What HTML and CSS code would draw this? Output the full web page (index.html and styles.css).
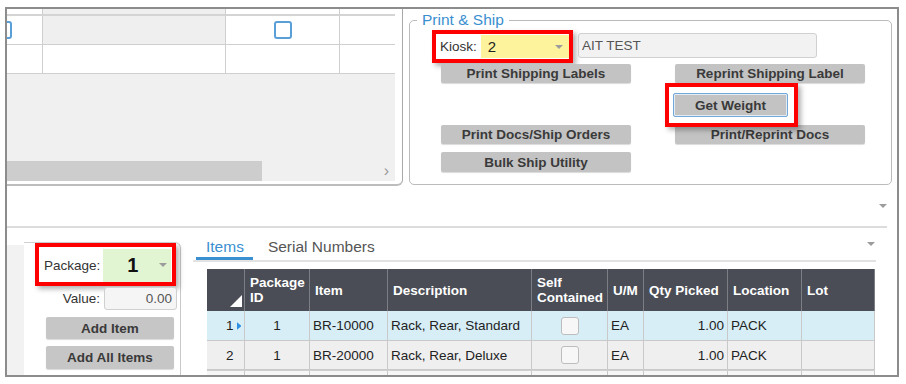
FILE: index.html
```html
<!DOCTYPE html>
<html lang="en">
<head>
    <meta charset="UTF-8">
    <title>Pack &amp; Ship</title>
    <link rel="stylesheet" href="styles.css">
</head>
<body>
    <div class="frame">
        <!-- top: order lines + print & ship -->
        <div class="top">
            <div class="lines-panel">
                <div class="lg-row lg-head">
                    <div class="lg-cell"></div>
                    <div class="lg-cell shade"></div>
                    <div class="lg-cell"></div>
                    <div class="lg-cell"></div>
                </div>
                <div class="lg-row">
                    <div class="lg-cell"><span class="chk chk-blue"></span></div>
                    <div class="lg-cell shade"></div>
                    <div class="lg-cell"><span class="chk chk-blue"></span></div>
                    <div class="lg-cell"></div>
                </div>
                <div class="lg-row">
                    <div class="lg-cell"></div>
                    <div class="lg-cell"></div>
                    <div class="lg-cell"></div>
                    <div class="lg-cell"></div>
                </div>
                <div class="lines-empty">
                    <div class="hscroll">
                        <div class="hscroll-thumb"></div>
                        <span class="hscroll-arrow">&#8250;</span>
                    </div>
                </div>
            </div>

            <fieldset class="print-ship">
                <legend>Print &amp; Ship</legend>
                <div class="kiosk-row">
                    <div class="callout kiosk-callout">
                        <span class="lbl">Kiosk:</span>
                        <div class="combo combo-yellow"><span class="combo-text">2</span><i class="caret"></i></div>
                    </div>
                    <div class="textbox kiosk-name">AIT TEST</div>
                </div>
                <div class="ship-actions">
                    <button class="btn c1 r1">Print Shipping Labels</button>
                    <button class="btn c2 r1">Reprint Shipping Label</button>
                    <div class="callout weight-callout">
                        <button class="btn btn-focus">Get Weight</button>
                    </div>
                    <button class="btn c1 r3">Print Docs/Ship Orders</button>
                    <button class="btn c2 r3">Print/Reprint Docs</button>
                    <button class="btn c1 r4">Bulk Ship Utility</button>
                </div>
            </fieldset>
        </div>

        <div class="mid"><i class="caret"></i></div>

        <!-- bottom: package + items -->
        <div class="bottom">
            <div class="pkg-side">
                <div class="strip"></div>
                <div class="pkg-panel">
                    <div class="callout pkg-callout">
                        <span class="lbl">Package:</span>
                        <div class="combo combo-green"><span class="combo-text">1</span><i class="caret"></i></div>
                    </div>
                    <div class="value-row">
                        <span class="lbl">Value:</span>
                        <div class="textbox value-box">0.00</div>
                    </div>
                    <button class="btn add-btn">Add Item</button>
                    <button class="btn add-btn add-all">Add All Items</button>
                </div>
            </div>

            <div class="items-area">
                <div class="tabs">
                    <span class="tab active">Items</span>
                    <span class="tab">Serial Numbers</span>
                    <i class="caret tabs-caret"></i>
                </div>

                <div class="items-grid">
                    <div class="ig-row ig-head">
                        <div class="ig-cell corner">
                            <svg width="12" height="12" viewBox="0 0 12 12"><polygon points="12,0 12,12 0,12" fill="#fff"/></svg>
                        </div>
                        <div class="ig-cell">Package ID</div>
                        <div class="ig-cell">Item</div>
                        <div class="ig-cell">Description</div>
                        <div class="ig-cell">Self Contained</div>
                        <div class="ig-cell">U/M</div>
                        <div class="ig-cell">Qty Picked</div>
                        <div class="ig-cell">Location</div>
                        <div class="ig-cell">Lot</div>
                    </div>
                    <div class="ig-row ig-current">
                        <div class="ig-cell rowhead">1<svg class="row-arrow" width="6" height="10" viewBox="0 0 6 10"><polygon points="0,0 6,5 0,10" fill="#2e8fe0"/></svg></div>
                        <div class="ig-cell center">1</div>
                        <div class="ig-cell">BR-10000</div>
                        <div class="ig-cell">Rack, Rear, Standard</div>
                        <div class="ig-cell center"><span class="chk"></span></div>
                        <div class="ig-cell">EA</div>
                        <div class="ig-cell right">1.00</div>
                        <div class="ig-cell">PACK</div>
                        <div class="ig-cell"></div>
                    </div>
                    <div class="ig-row">
                        <div class="ig-cell rowhead">2</div>
                        <div class="ig-cell center">1</div>
                        <div class="ig-cell">BR-20000</div>
                        <div class="ig-cell">Rack, Rear, Deluxe</div>
                        <div class="ig-cell center"><span class="chk"></span></div>
                        <div class="ig-cell">EA</div>
                        <div class="ig-cell right">1.00</div>
                        <div class="ig-cell">PACK</div>
                        <div class="ig-cell"></div>
                    </div>
                    <div class="ig-row ig-next">
                        <div class="ig-cell"></div><div class="ig-cell"></div><div class="ig-cell"></div>
                        <div class="ig-cell"></div><div class="ig-cell"></div><div class="ig-cell"></div>
                        <div class="ig-cell"></div><div class="ig-cell"></div><div class="ig-cell"></div>
                    </div>
                </div>
            </div>
        </div>
    </div>
</body>
</html>
```

FILE: styles.css
```css
body {
    margin: 0;
    background: #ffffff;
    font-family: "Liberation Sans", Arial, sans-serif;
    font-size: 13.5px;
    color: #333;
}

/* screenshot frame */
.frame {
    margin: 7px 0 0 5px;
    width: 894px;
    height: 370px;
    box-sizing: border-box;
    border: 2px solid #8c8c8c;
    overflow: hidden;
}

.top {
    display: flex;
    height: 177px;
}

/* order lines grid (scrolled) */
.lines-panel {
    width: 396px;
    height: 177px;
    box-sizing: border-box;
    padding-right: 7px;
    border-right: 1px solid #a9a9a9;
    border-bottom: 2px solid #bdbdbd;
    border-bottom-right-radius: 6px;
    overflow: hidden;
}

.lg-row {
    display: grid;
    grid-template-columns: 80px 183px 114px 55px;
    margin-left: -44px;
}

.lg-cell {
    height: 29px;
    box-sizing: border-box;
    border-right: 1px solid #cfcfcf;
    border-bottom: 1px solid #cfcfcf;
    display: flex;
    justify-content: center;
    align-items: center;
}

.lg-cell:last-child {
    border-right: none;
}

.lg-head .lg-cell {
    height: 7px;
    border-bottom: 2px solid #d4d4d4;
}

.lg-cell.shade {
    background: #efefef;
}

.chk {
    width: 18px;
    height: 18px;
    box-sizing: border-box;
    border: 1px solid #bdbdbd;
    border-radius: 3px;
    background: #f7f7f7;
}

.chk-blue {
    border: 2px solid #5a9fd8;
    background: #fff;
}

.lines-empty {
    height: 107px;
    background: #f0f0f0;
    display: flex;
    flex-direction: column;
    justify-content: flex-end;
}

.hscroll {
    height: 20px;
    display: flex;
    align-items: center;
}

.hscroll-thumb {
    width: 255px;
    height: 20px;
    background: #cdcdcd;
}

.hscroll-arrow {
    margin-left: auto;
    margin-right: 6px;
    color: #9a9a9a;
    font-size: 16px;
}

/* print & ship */
.print-ship {
    align-self: flex-start;
    width: 483px;
    box-sizing: border-box;
    margin: 2px 0 0 6px;
    padding: 0 0 12px 22px;
    border: 1px solid #bbbbbb;
    border-radius: 5px;
    min-width: 0;
}

.print-ship legend {
    margin-left: -15px;
    padding: 0 5px;
    font-size: 15.5px;
    line-height: 18px;
    color: #3a8fd0;
}

.kiosk-row {
    display: flex;
    align-items: flex-start;
    margin-top: 1px;
}

.callout {
    box-sizing: border-box;
    border: 4px solid #ff0000;
    background: #fff;
    box-shadow: 3px 3px 5px rgba(0, 0, 0, 0.3);
}

.kiosk-callout {
    width: 141px;
    height: 33px;
    padding: 1px 0 0 4px;
    display: flex;
    align-items: flex-start;
    gap: 4px;
}

.lbl {
    color: #333;
    white-space: nowrap;
}

.kiosk-callout .lbl {
    line-height: 23px;
}

.combo {
    display: flex;
    align-items: center;
}

.combo-yellow {
    width: 88px;
    height: 23px;
    background: #fcf39c;
}

.combo-yellow .combo-text {
    flex: 1;
    padding-left: 7px;
    font-size: 15px;
    color: #222;
}

.combo-yellow .caret {
    margin-right: 6px;
}

.caret {
    width: 0;
    height: 0;
    border-left: 4px solid transparent;
    border-right: 4px solid transparent;
    border-top: 4px solid #9c9c9c;
}

.textbox {
    box-sizing: border-box;
    background: #f2f2f2;
    border: 1px solid #d0d0d0;
    border-radius: 3px;
    color: #555;
}

.kiosk-name {
    width: 239px;
    height: 25px;
    margin: 3px 0 0 5px;
    padding-left: 3px;
    line-height: 23px;
}

.ship-actions {
    display: grid;
    grid-template-columns: 190px 190px;
    grid-template-rows: 19px 42px 19px 28px;
    column-gap: 44px;
    margin: 1px 0 0 9px;
}

.btn {
    margin: 0;
    padding: 0;
    border: none;
    border-radius: 2px;
    background: #c3c3c3;
    box-shadow: 0 1px 1px rgba(0, 0, 0, 0.15);
    font-family: inherit;
    font-size: 13.5px;
    font-weight: bold;
    color: #3a3a3a;
    white-space: nowrap;
}

.c1 { grid-column: 1; }
.c2 { grid-column: 2; }
.r1 { grid-row: 1; }
.r3 { grid-row: 3; }
.r4 { grid-row: 4; align-self: end; height: 20px; }

.weight-callout {
    grid-row: 2;
    grid-column: 2;
    align-self: start;
    justify-self: start;
    margin-left: -10px;
    width: 133px;
    height: 44px;
    padding: 6px 0 0 4px;
    z-index: 1;
}

.btn-focus {
    width: 115px;
    height: 24px;
    border: 1px solid #72a9da;
    box-shadow: inset 0 0 0 1px #e3ecf4;
}

/* middle strip */
.mid {
    width: 880px;
    height: 42px;
    box-sizing: border-box;
    border-bottom: 2px solid #dcdcdc;
    display: flex;
    justify-content: flex-end;
    align-items: center;
}

/* bottom */
.bottom {
    display: flex;
}

.pkg-side {
    width: 174px;
    padding-top: 14px;
    display: flex;
}

.strip {
    width: 17px;
    margin-top: 3px;
    height: 140px;
    background: #f2f2f2;
}

.pkg-panel {
    width: 157px;
    height: 140px;
    box-sizing: border-box;
    padding: 0 3px 0 11px;
    border-top: 1px solid #d0d0d0;
    border-right: 1px solid #c8c8c8;
    border-top-right-radius: 6px;
}

.pkg-callout {
    width: 141px;
    height: 43px;
    padding: 1px 0 0 5px;
    display: flex;
    align-items: center;
    gap: 3px;
}

.combo-green {
    width: 68px;
    height: 33px;
    background: #e2f5d2;
}

.combo-green .combo-text {
    flex: 1;
    text-align: center;
    padding-left: 3px;
    font-size: 20px;
    font-weight: bold;
    color: #111;
}

.combo-green .caret {
    margin-right: 4px;
}

.value-row {
    margin-top: 1px;
    display: flex;
    justify-content: flex-end;
    align-items: center;
    gap: 4px;
}

.value-box {
    width: 73px;
    height: 23px;
    padding-right: 4px;
    line-height: 21px;
    text-align: right;
    background: #f5f5f5;
}

.add-btn {
    display: block;
    width: 128px;
    height: 22px;
    margin: 7px 0 0 11px;
    background: #c6c6c6;
}

.add-all {
    height: 23px;
}

/* items tabs + grid */
.items-area {
    width: 683px;
    margin-left: 12px;
}

.tabs {
    display: flex;
    align-items: flex-end;
    height: 34px;
    box-sizing: border-box;
    padding-left: 3px;
    border-bottom: 2px solid #e2e2e2;
}

.tab {
    padding: 10px 9px 1px 10px;
    line-height: 18px;
    font-size: 15.5px;
    color: #555;
    border-bottom: 3px solid transparent;
}

.tab + .tab {
    margin-left: 5px;
}

.tab.active {
    color: #3a8fd0;
    border-bottom-color: #3a8fd0;
}

.tabs-caret {
    margin: 0 1px 0 auto;
    align-self: center;
}

.items-grid {
    width: 668px;
    margin: 7px 0 0 14px;
}

.ig-row {
    display: grid;
    grid-template-columns: 38px 65px 78px 144px 76px 36px 84px 74px 73px;
    height: 29px;
    background: #efefef;
}

.ig-cell {
    box-sizing: border-box;
    display: flex;
    align-items: center;
    padding: 0 3px;
    border-right: 1px solid #c9c9c9;
    border-bottom: 1px solid #c9c9c9;
    color: #222;
    white-space: nowrap;
    overflow: hidden;
}

.ig-cell.center { justify-content: center; }
.ig-cell.right { justify-content: flex-end; }

.ig-head {
    height: 42px;
    background: #4a4d55;
}

.ig-head .ig-cell {
    padding: 0 0 0 5px;
    border-right: 1px solid #7b7e85;
    border-bottom: none;
    color: #fff;
    font-weight: bold;
    line-height: 15px;
    white-space: normal;
    overflow: visible;
}

.ig-head .corner {
    justify-content: flex-end;
    align-items: flex-end;
    padding: 0 2px 4px 0;
}

.ig-current {
    height: 30px;
    background: #d7eef7;
}

.rowhead {
    padding-left: 19px;
}

.row-arrow {
    margin-left: 3px;
}

.ig-next {
    border-top: 1px solid #d0d0d0;
    background: #f6f6f6;
}
```
